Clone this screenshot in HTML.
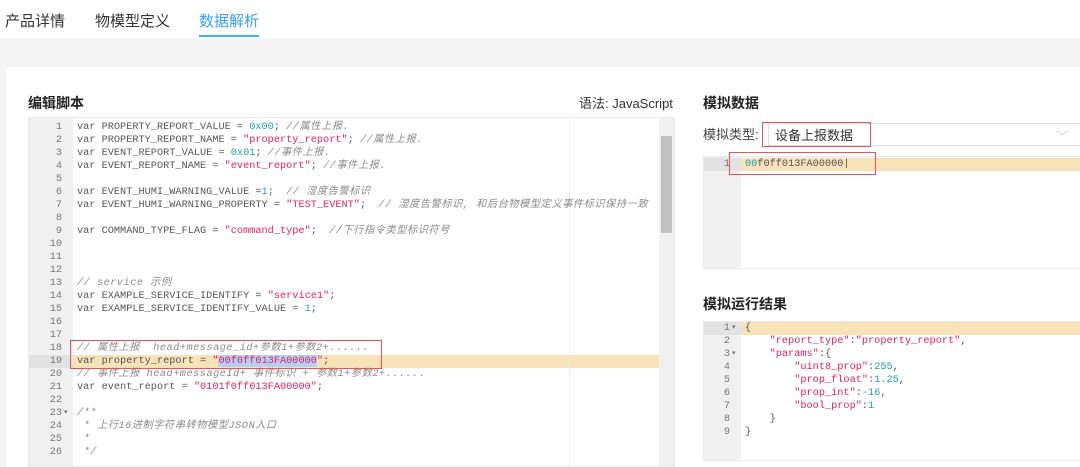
<!DOCTYPE html>
<html><head><meta charset="utf-8"><style>
*{margin:0;padding:0;box-sizing:border-box}
body{width:1080px;height:455px;overflow:hidden;background:#f5f5f5;font-family:"Liberation Sans","Noto Sans CJK SC",sans-serif;position:relative}
.tabs{position:absolute;left:0;top:0;width:1080px;height:38px;background:#fff}
.tab{position:absolute;top:10px;font-size:15px;color:#333}
.card{position:absolute;left:6px;top:67px;width:1074px;height:400px;background:#fff}
.h{position:absolute;font-size:14px;font-weight:bold;color:#222}
.ed{position:absolute;background:#fff;border:1px solid #eaeaea;overflow:hidden}
.gut{position:absolute;left:0;top:0;bottom:0;background:#f0f0f0}
.code{position:absolute;font-family:"Liberation Mono","Noto Sans CJK SC",monospace;font-size:10.25px;line-height:13px;white-space:pre;color:#555}
.ln{position:absolute;font-family:"Liberation Mono",monospace;font-size:10.25px;line-height:13px;color:#777;text-align:right}
.c{color:#8a8a8a;font-style:italic;letter-spacing:0.5px}.s{color:#e0245e}.n{color:#20a0b0}
.red{position:absolute;border:1px solid #f05050}
</style></head><body>
<div class="tabs">
<div class="tab" style="left:5px">产品详情</div>
<div class="tab" style="left:95px">物模型定义</div>
<div class="tab" style="left:199px;color:#3aa0f0">数据解析</div>
<div style="position:absolute;left:199px;top:35px;width:60px;height:2px;background:#3ab0f5"></div>
</div>
<div class="card"></div>
<div class="h" style="left:28px;top:93px">编辑脚本</div>
<div style="position:absolute;left:579px;top:93px;font-size:13px;color:#333">语法: JavaScript</div>
<div class="ed" style="left:28px;top:117px;width:647px;height:350px">
<div class="gut" style="width:44px"></div>
<div style="position:absolute;left:0;top:237px;width:44px;height:13px;background:#e2e2e2"></div>
<div style="position:absolute;left:44px;top:237px;width:586px;height:13px;background:#f8e2b8"></div>
<div style="position:absolute;left:540px;top:0;width:1px;height:350px;background:#eee"></div>
<div style="position:absolute;left:630px;top:0;width:15px;height:350px;background:#f0f0f0"></div>
<div style="position:absolute;left:632px;top:18px;width:11px;height:97px;background:#c1c1c1"></div>
<div class="ln" style="left:0;top:3px;width:33px">1<br>2<br>3<br>4<br>5<br>6<br>7<br>8<br>9<br>10<br>11<br>12<br>13<br>14<br>15<br>16<br>17<br>18<br>19<br>20<br>21<br>22<br>23<br>24<br>25<br>26</div>
<div class="ln" style="left:35px;top:289px;font-size:7px">▾</div>
<div class="code" style="left:48px;top:3px">var PROPERTY_REPORT_VALUE = <span class="n">0x00</span>; <span class="c">//属性上报.</span>
var PROPERTY_REPORT_NAME = <span class="s">"property_report"</span>; <span class="c">//属性上报.</span>
var EVENT_REPORT_VALUE = <span class="n">0x01</span>; <span class="c">//事件上报.</span>
var EVENT_REPORT_NAME = <span class="s">"event_report"</span>; <span class="c">//事件上报.</span>

var EVENT_HUMI_WARNING_VALUE =<span class="n">1</span>;  <span class="c">// 湿度告警标识</span>
var EVENT_HUMI_WARNING_PROPERTY = <span class="s">"TEST_EVENT"</span>;  <span class="c">// 湿度告警标识, 和后台物模型定义事件标识保持一致</span>

var COMMAND_TYPE_FLAG = <span class="s">"command_type"</span>;  <span class="c">//下行指令类型标识符号</span>



<span class="c">// service 示例</span>
var EXAMPLE_SERVICE_IDENTIFY = <span class="s">"service1"</span>;
var EXAMPLE_SERVICE_IDENTIFY_VALUE = <span class="n">1</span>;


<span class="c">// 属性上报  head+message_id+参数1+参数2+......</span>
var property_report = <span class="s">"<span style="background:#b5d0f5">00f0ff013FA00000</span>"</span>;
<span class="c">// 事件上报 head+messageId+ 事件标识 + 参数1+参数2+......</span>
var event_report = <span class="s">"0101f0ff013FA00000"</span>;

<span class="c">/**</span>
<span class="c"> * 上行16进制字符串转物模型JSON入口</span>
<span class="c"> *</span>
<span class="c"> */</span></div>
</div>
<div class="red" style="left:70px;top:340px;width:312px;height:29px"></div>

<div class="h" style="left:703px;top:93px">模拟数据</div>
<div style="position:absolute;left:703px;top:124px;font-size:13px;color:#444">模拟类型:</div>
<div style="position:absolute;left:768px;top:123px;width:320px;height:23px;border:1px solid #e0e0e0;background:#fff"></div>
<div style="position:absolute;left:775px;top:125px;font-size:13px;color:#333">设备上报数据</div>
<div style="position:absolute;left:1058px;top:124px;font-size:12px;color:#bbb;transform:scaleX(1.4)">⌵</div>
<div class="red" style="left:762px;top:122px;width:109px;height:25px"></div>
<div class="ed" style="left:703px;top:156px;width:380px;height:113px">
<div class="gut" style="width:37px"></div>
<div style="position:absolute;left:0;top:1px;width:37px;height:13px;background:#e2e2e2"></div>
<div style="position:absolute;left:37px;top:1px;width:350px;height:13px;background:#f8e2b8"></div>
<div class="ln" style="left:0;top:1px;width:26px">1</div>
<div class="code" style="left:41px;top:1px"><span class="n">00</span>f0ff013FA00000|</div>
</div>
<div class="red" style="left:729px;top:152px;width:147px;height:23px"></div>

<div class="h" style="left:703px;top:294px">模拟运行结果</div>
<div class="ed" style="left:703px;top:321px;width:380px;height:140px">
<div class="gut" style="width:37px"></div>
<div style="position:absolute;left:0;top:0;width:37px;height:13px;background:#e2e2e2"></div>
<div style="position:absolute;left:37px;top:0;width:350px;height:13px;background:#f8e2b8"></div>
<div class="ln" style="left:0;top:0;width:26px">1<br>2<br>3<br>4<br>5<br>6<br>7<br>8<br>9</div>
<div class="ln" style="left:28px;top:0;font-size:7px">▾<br><br>▾</div>
<div class="code" style="left:41px;top:0">{
    <span class="s">"report_type"</span>:<span class="s">"property_report"</span>,
    <span class="s">"params"</span>:{
        <span class="s">"uint8_prop"</span>:<span class="n">255</span>,
        <span class="s">"prop_float"</span>:<span class="n">1.25</span>,
        <span class="s">"prop_int"</span>:<span class="n">-16</span>,
        <span class="s">"bool_prop"</span>:<span class="n">1</span>
    }
}</div>
</div>
</body></html>
